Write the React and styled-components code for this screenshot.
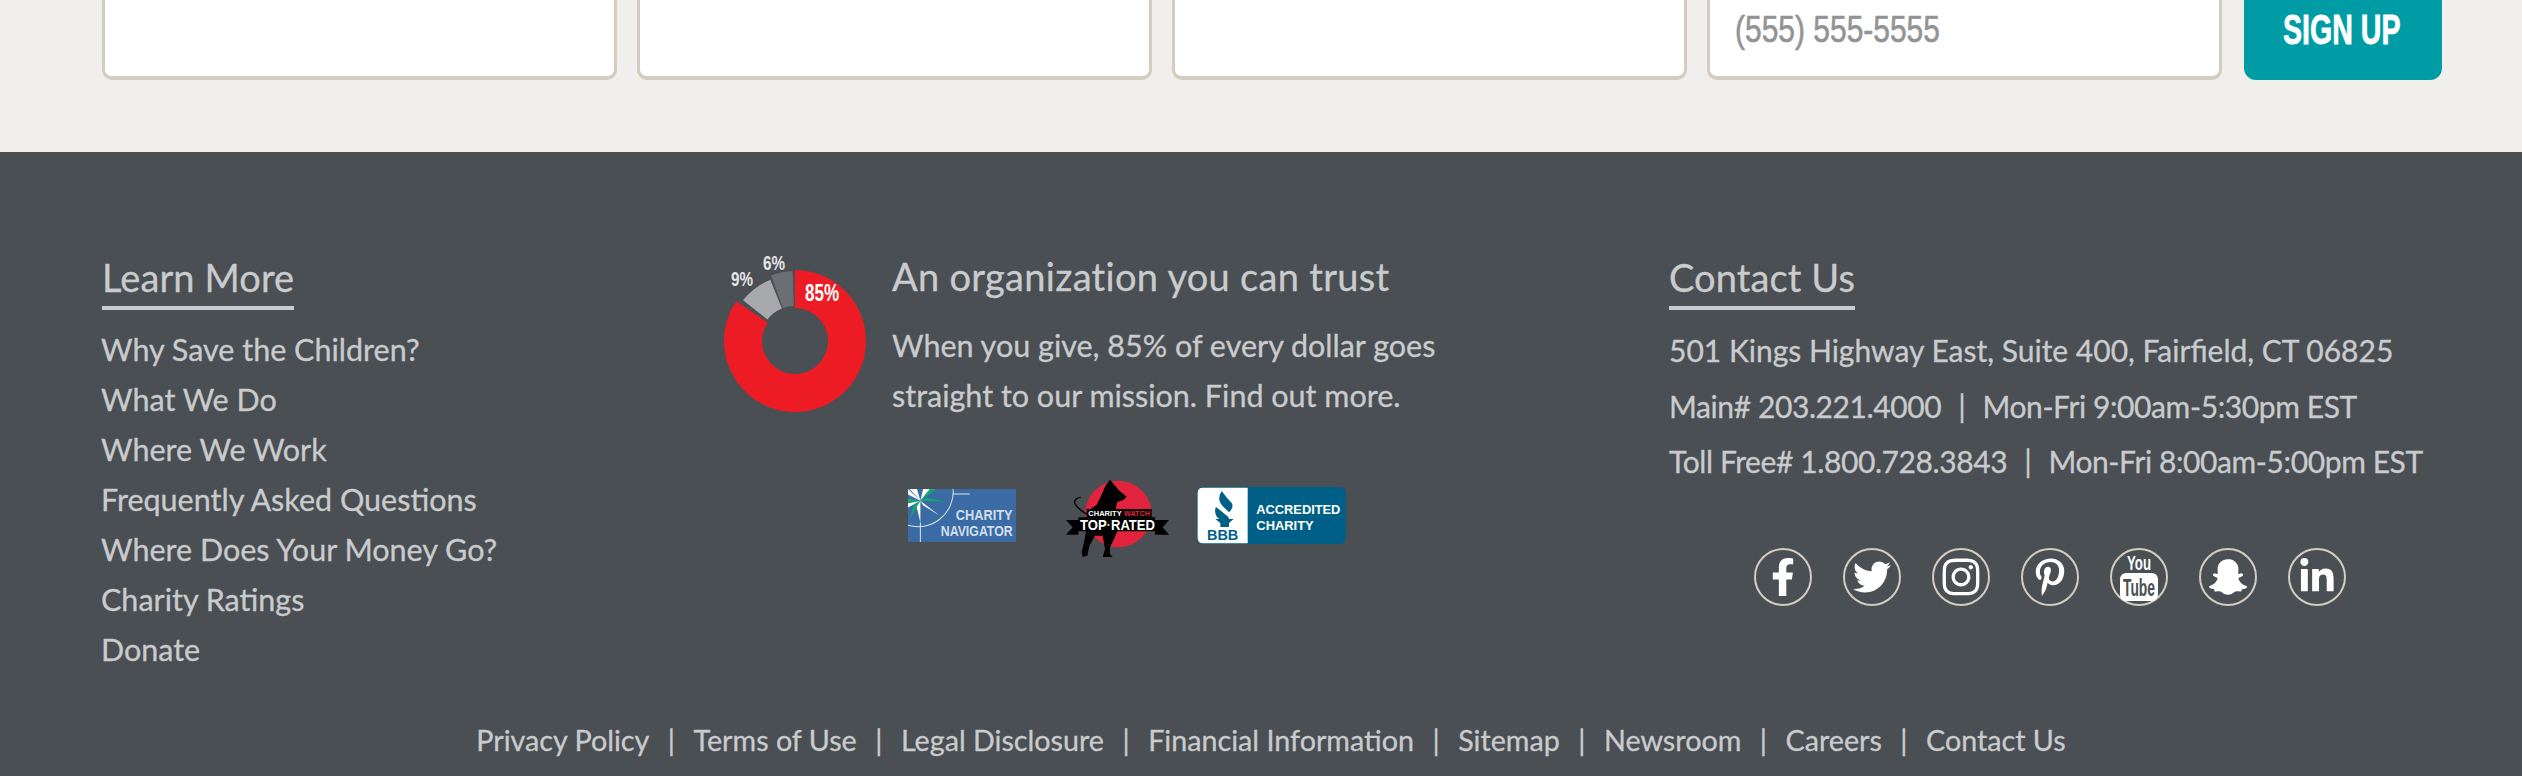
import React from 'react'
import styled, { createGlobalStyle } from 'styled-components'
import { FaFacebookF, FaTwitter, FaInstagram, FaPinterestP, FaSnapchatGhost, FaLinkedinIn } from 'react-icons/fa'

const GlobalStyle = createGlobalStyle`
    html, body {
        margin: 0;
        padding: 0;
        background: #4a4f53;
    }
    body {
        font-family: Lato, 'Open Sans', sans-serif;
        -webkit-text-stroke: 0.3px;
    }
`

const SignupBand = styled.section`
    height: 152px;
    background: #f1efeb;
    overflow: hidden;
    display: flex;
    align-items: flex-end;
    gap: 20.5px;
    padding: 0 80px 72px 102px;
    box-sizing: border-box;
`

const Field = styled.div`
    width: 514.5px;
    height: 100px;
    flex: none;
    box-sizing: border-box;
    background: #fff;
    border: solid #d3cdc0;
    border-width: 3px 3px 4px;
    border-radius: 10px;
    padding: 0 25px;
    display: flex;
    align-items: center;
`

// the original face is a condensed one, none is installed so the glyphs get squeezed
const Squeezed = styled.span`
    display: inline-block;
    font-family: 'Liberation Sans', sans-serif;
    white-space: nowrap;
    transform-origin: left center;
`

const Placeholder = styled(Squeezed)`
    color: #939393;
    font-size: 37px;
    transform: scaleX(0.81);
    -webkit-text-stroke: 0.6px;
`

const SignupButton = styled.button`
    width: 198px;
    height: 100px;
    flex: none;
    margin-left: 1.5px;
    border: 0;
    border-radius: 0 0 12px 12px;
    background: #009ca6;
    color: #fff;
    padding: 0 0 0 39px;
    text-align: left;
`

const ButtonLabel = styled(Squeezed)`
    font-weight: 700;
    font-size: 42px;
    transform: scaleX(0.68);
    -webkit-text-stroke: 0.8px;
`

const Footer = styled.footer`
    height: 624px;
    box-sizing: border-box;
    background: #4a4f53;
    color: #c9cbcd;
    padding: 98px 0 0 102px;
    position: relative;
`

const Columns = styled.div`
    display: grid;
    grid-template-columns: 618px 949px 1fr;
`

const Heading = styled.h3`
    display: inline-block;
    margin: 0;
    font-size: 38px;
    line-height: 54px;
    font-weight: 400;
    letter-spacing: 0.1px;
    padding-bottom: 2px;
    border-bottom: 4px solid #c9cbcd;
    white-space: nowrap;
`

const LinkList = styled.ul`
    list-style: none;
    margin: 14px 0 0 -1px;
    padding: 0;
`

const FooterLink = styled.li`
    font-size: 30.5px;
    line-height: 50px;
    white-space: nowrap;
`

const Trust = styled.div`
    display: flex;
    flex-direction: column;
`

const TrustRow = styled.div`
    display: flex;
    align-items: flex-start;
`

const Donut = styled.svg`
    flex: none;
    width: 150px;
    height: 165px;
    margin-top: 2px;
    margin-right: 22px;
`

const TrustTitle = styled.h3`
    margin: 0 0 18px;
    font-size: 38px;
    line-height: 52px;
    font-weight: 400;
    letter-spacing: 0.3px;
    white-space: nowrap;
`

const TrustText = styled.p`
    margin: 0;
    font-size: 30.5px;
    line-height: 50px;
    width: 590px;
`

const Badges = styled.div`
    display: flex;
    align-items: center;
    margin: 54px 0 0 188px;
`

const Badge = styled.svg`
    flex: none;
    width: ${props => props.$w}px;
    height: ${props => props.$h}px;
    margin-top: ${props => props.$top || 0}px;
    margin-right: ${props => props.$gap || 0}px;
`

const ContactLine = styled.p`
    margin: 0;
    font-size: 30px;
    line-height: 55.5px;
    letter-spacing: ${props => (props.$tight ? '-0.4px' : '0')};
    white-space: nowrap;
`

const ContactSep = styled.span`
    margin: 0 17px;
`

const ContactLines = styled.div`
    margin-top: 13px;
`

const Socials = styled.div`
    display: flex;
    gap: 31px;
    margin: 58px 0 0 85px;
`

const SocialIcon = styled.a`
    width: 58px;
    height: 58px;
    flex: none;
    box-sizing: border-box;
    border: 2px solid #d3cdc0;
    border-radius: 50%;
    color: #fff;
    display: flex;
    align-items: center;
    justify-content: center;
    font-size: ${props => props.$size || 34}px;
`

const BottomLinks = styled.nav`
    position: absolute;
    left: 20px;
    right: 0;
    bottom: 16px;
    display: flex;
    justify-content: center;
    font-size: 28.7px;
    line-height: 40px;
    white-space: nowrap;
`

const Sep = styled.span`
    margin: 0 18.5px;
`

const polar = (cx, cy, r, deg) => {
    const a = (deg - 90) * Math.PI / 180
    return [(cx + r * Math.cos(a)).toFixed(2), (cy + r * Math.sin(a)).toFixed(2)]
}

const wedge = (r, inner, from, to) => {
    const [x1, y1] = polar(75, 89, r, from)
    const [x2, y2] = polar(75, 89, r, to)
    const [x3, y3] = polar(75, 89, inner, to)
    const [x4, y4] = polar(75, 89, inner, from)
    const large = to - from > 180 ? 1 : 0
    return `M${x1} ${y1}A${r} ${r} 0 ${large} 1 ${x2} ${y2}L${x3} ${y3}A${inner} ${inner} 0 ${large} 0 ${x4} ${y4}Z`
}

const labelFont = "'Liberation Sans', sans-serif"

const YoutubeMark = () => (
    <svg width="42" height="50" viewBox="0 0 42 50">
        <text x="21" y="18" fill="#fff" fontFamily={labelFont} fontWeight="700" fontSize="20" textAnchor="middle" textLength="24" lengthAdjust="spacingAndGlyphs">You</text>
        <rect x="2" y="21" width="38" height="28" rx="6" fill="#fff" />
        <text x="21" y="44" fill="#4a4f53" fontFamily={labelFont} fontWeight="700" fontSize="23" textAnchor="middle" textLength="32" lengthAdjust="spacingAndGlyphs">Tube</text>
    </svg>
)

const learnLinks = [
    'Why Save the Children?',
    'What We Do',
    'Where We Work',
    'Frequently Asked Questions',
    'Where Does Your Money Go?',
    'Charity Ratings',
    'Donate',
]

const bottomLinks = [
    'Privacy Policy',
    'Terms of Use',
    'Legal Disclosure',
    'Financial Information',
    'Sitemap',
    'Newsroom',
    'Careers',
    'Contact Us',
]

const socials = [
    { Icon: FaFacebookF, size: 38, name: 'Facebook' },
    { Icon: FaTwitter, size: 38, name: 'Twitter' },
    { Icon: FaInstagram, size: 42, name: 'Instagram' },
    { Icon: FaPinterestP, size: 38, name: 'Pinterest' },
    { Icon: YoutubeMark, size: 42, name: 'YouTube' },
    { Icon: FaSnapchatGhost, size: 38, name: 'Snapchat' },
    { Icon: FaLinkedinIn, size: 38, name: 'LinkedIn' },
]

const PieChart = () => (
    <Donut viewBox="0 0 150 165">
        <path d={wedge(71, 33, 0, 304)} fill="#ed1c24" />
        <path d={wedge(66, 35, 308, 338)} fill="#a7a9ac" />
        <path d={wedge(70, 35, 340, 358)} fill="#6d6e71" />
        <g fontFamily={labelFont} fontWeight="700" fill="#fff">
            <text x="85" y="49" fontSize="23" textLength="34" lengthAdjust="spacingAndGlyphs">85%</text>
            <text x="11" y="34" fontSize="20" textLength="22" lengthAdjust="spacingAndGlyphs" fill="#e4e5e6">9%</text>
            <text x="43" y="18" fontSize="20" textLength="22" lengthAdjust="spacingAndGlyphs" fill="#e4e5e6">6%</text>
        </g>
    </Donut>
)

const CharityNavigator = () => (
    <Badge $w={108} $h={53} $gap={50} viewBox="55 70 323 158">
        <rect x="55" y="70" width="323" height="158" fill="#3a6ba4" />
        <path d="M92 105L60 70H82ZM92 105L100 70H122ZM92 105L150 150L100 118ZM92 105L55 125V112ZM92 105L92 170L80 120ZM92 105L55 70V86Z" fill="#fff" />
        <path d="M92 105L120 70H140ZM92 105L170 108L110 96ZM92 105L60 160L72 118ZM92 105L55 98V112Z" fill="#17a673" />
        <path d="M190 70A105 105 0 0 1 55 178" fill="none" stroke="#d8e6e6" strokeWidth="3" />
        <path d="M190 85H240M92 170V228" stroke="#d8e6e6" strokeWidth="3" />
        <g fontFamily={labelFont} fontWeight="700" fill="#d2deea" fontSize="42" textAnchor="end">
            <text x="368" y="162" textLength="170" lengthAdjust="spacingAndGlyphs">CHARITY</text>
            <text x="368" y="210" textLength="215" lengthAdjust="spacingAndGlyphs">NAVIGATOR</text>
        </g>
    </Badge>
)

const CharityWatch = () => (
    <Badge $w={103} $h={78} $gap={28} $top={5} viewBox="18 15 309 234">
        <circle cx="175" cy="120" r="100" fill="#e2233d" />
        <path d="M150 17L165 35L178 50L200 68L190 78L172 84L168 100L170 130L172 172L162 195L150 220L150 240L158 249H128L135 225L128 185H105L88 215L82 245L68 249L65 235L72 205L78 172L85 110L110 92L125 62L135 38Z" fill="#000" />
        <path d="M88 125Q52 105 44 88Q42 72 62 70" fill="none" stroke="#000" strokeWidth="4" />
        <rect x="80" y="105" width="195" height="30" fill="#000" />
        <path d="M55 130H285V138H327L308 160L327 182H285V172H55V182H18L38 160L18 138H55Z" fill="#000" />
        <g fontFamily={labelFont} fontWeight="700">
            <text x="85" y="125" fontSize="19" fill="#fff" textLength="100" lengthAdjust="spacingAndGlyphs">CHARITY</text>
            <text x="192" y="125" fontSize="19" fill="#e2233d" textLength="78" lengthAdjust="spacingAndGlyphs">WATCH</text>
            <text x="60" y="169" fontSize="44" fill="#fff" textLength="225" lengthAdjust="spacingAndGlyphs">TOP<tspan fill="#f2c230">·</tspan>RATED</text>
        </g>
    </Badge>
)

const BbbSeal = () => (
    <Badge $w={149} $h={57} viewBox="920 62 447 171">
        <rect x="920" y="62" width="447" height="171" rx="18" fill="#005f86" />
        <path d="M938 64H1072V231H938Q922 231 922 215V80Q922 64 938 64Z" fill="#fff" />
        <path d="M994 74Q1010 96 1024 110Q1032 122 1016 138L996 118Q978 100 994 74ZM977 122Q990 132 1014 152Q1020 162 1006 176Q990 160 980 152Q970 136 977 122Z" fill="#005f86" />
        <path d="M975 158H1030L1016 170V182H990V170Z" fill="#005f86" />
        <text x="950" y="222" fontFamily={labelFont} fontWeight="700" fill="#005f86" fontSize="44" textLength="94" lengthAdjust="spacingAndGlyphs">BBB</text>
        <g fontFamily={labelFont} fontWeight="700" fill="#fff" fontSize="40">
            <text x="1098" y="144" textLength="252" lengthAdjust="spacingAndGlyphs">ACCREDITED</text>
            <text x="1098" y="191" textLength="172" lengthAdjust="spacingAndGlyphs">CHARITY</text>
        </g>
    </Badge>
)

const App = () => (
    <>
        <GlobalStyle />
        <SignupBand>
            <Field />
            <Field />
            <Field />
            <Field><Placeholder>(555) 555-5555</Placeholder></Field>
            <SignupButton><ButtonLabel>SIGN UP</ButtonLabel></SignupButton>
        </SignupBand>
        <Footer>
            <Columns>
                <div>
                    <Heading>Learn More</Heading>
                    <LinkList>
                        {learnLinks.map(link => <FooterLink key={link}>{link}</FooterLink>)}
                    </LinkList>
                </div>
                <Trust>
                    <TrustRow>
                        <PieChart />
                        <div>
                            <TrustTitle>An organization you can trust</TrustTitle>
                            <TrustText>When you give, 85% of every dollar goes straight to our mission. Find out more.</TrustText>
                        </div>
                    </TrustRow>
                    <Badges>
                        <CharityNavigator />
                        <CharityWatch />
                        <BbbSeal />
                    </Badges>
                </Trust>
                <div>
                    <Heading>Contact Us</Heading>
                    <ContactLines>
                        <ContactLine>501 Kings Highway East, Suite 400, Fairfield, CT 06825</ContactLine>
                        <ContactLine $tight>Main# 203.221.4000<ContactSep>|</ContactSep>Mon-Fri 9:00am-5:30pm EST</ContactLine>
                        <ContactLine $tight>Toll Free# 1.800.728.3843<ContactSep>|</ContactSep>Mon-Fri 8:00am-5:00pm EST</ContactLine>
                    </ContactLines>
                    <Socials>
                        {socials.map(({ Icon, size, name }) => (
                            <SocialIcon key={name} aria-label={name} $size={size}><Icon /></SocialIcon>
                        ))}
                    </Socials>
                </div>
            </Columns>
            <BottomLinks>
                {bottomLinks.map((link, i) => (
                    <React.Fragment key={link}>
                        {i > 0 && <Sep>|</Sep>}
                        <span>{link}</span>
                    </React.Fragment>
                ))}
            </BottomLinks>
        </Footer>
    </>
)

export default App
